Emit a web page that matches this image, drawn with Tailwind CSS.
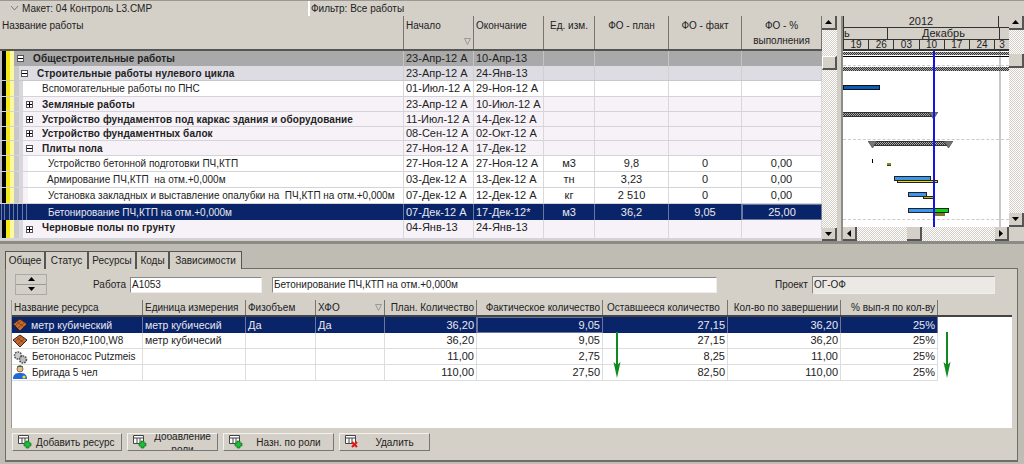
<!DOCTYPE html>
<html lang="en">
<head>
    <meta charset="UTF-8">
    <title>Контроль L3</title>
    <script src="https://cdn.jsdelivr.net/npm/@tailwindcss/browser@4"></script>
</head>
<body class="w-[1024px] h-[464px] overflow-hidden bg-[#d4d0c8] text-[10px] leading-[13px] text-[#222] font-['Liberation_Sans',sans-serif]">

<!-- top bar -->
<div class="flex h-[16px] border-t border-[#9a9890] items-center">
    <div class="w-[310px] h-full flex items-center pl-[11px] gap-[4px] border-r-2 border-white">
        <svg width="7" height="5" viewBox="0 0 7 5"><path d="M0 0 L3.5 4 L7 0" fill="none" stroke="#777"/></svg>
        <span>Макет: 04 Контроль L3.CMP</span>
    </div>
    <div class="pl-[1px]">Фильтр: Все работы</div>
</div>

<div class="flex h-[225px]">
    <!-- activity table -->
    <div class="w-[822px] flex flex-col">
        <div class="grid grid-cols-[404px_70px_70px_51px_74px_73px_80px] h-[35px] border-b-2 border-[#555] *:border-r *:border-[#77756f] *:pt-[3px] *:px-[2px]">
            <div>Название работы</div>
            <div class="relative">Начало
                <svg class="absolute right-[2px] top-[22px]" width="7" height="7" viewBox="0 0 7 7"><path d="M.5.5h6L3.5 6.5z" fill="none" stroke="#999"/></svg>
            </div>
            <div>Окончание</div>
            <div class="text-center">Ед. изм.</div>
            <div class="text-center">ФО - план</div>
            <div class="text-center">ФО - факт</div>
            <div class="text-center">ФО - %<br><span class="leading-[17px]">выполнения</span></div>
        </div>

        <!-- rows -->
        <div class="grid grid-cols-[404px_70px_70px_51px_74px_73px_80px] h-[15px] text-[11px] bg-[#a9a9a9] items-center *:h-full *:flex *:items-center *:px-[2px]">
            <div class="!pl-0 text-[10px] border-r border-[#c4c4c8]"><span class="flex h-full w-[14px] shrink-0"><span class="w-[2px] bg-[#bbb]"></span><span class="w-[4px] bg-black"></span><span class="w-[4px] bg-[#f2e916]"></span><span class="w-[4px] bg-[#fbf8a0]"></span></span><span class="ml-[3px] mr-[9px] w-[7px] h-[7px] border border-[#555] bg-white flex items-center justify-center"><span class="w-[5px] h-px bg-black"></span></span><b class="tracking-[.1px]">Общестроительные работы</b></div>
            <div class="border-r border-[#c4c4c8]">23-Апр-12 A</div><div class="border-r border-[#c4c4c8]">10-Апр-13</div><div class="border-r border-[#c4c4c8]"></div><div class="border-r border-[#c4c4c8]"></div><div class="border-r border-[#c4c4c8]"></div><div></div>
        </div>
        <div class="grid grid-cols-[404px_70px_70px_51px_74px_73px_80px] h-[15px] text-[11px] bg-[#dcdce2] border-b border-[#c8c8cc] *:h-full *:flex *:items-center *:px-[2px] *:border-r *:border-[#d0d0d4]">
            <div class="!pl-0 text-[10px]"><span class="flex h-full w-[14px] shrink-0"><span class="w-[2px] bg-[#bbb]"></span><span class="w-[4px] bg-black"></span><span class="w-[4px] bg-[#f2e916]"></span><span class="w-[4px] bg-[#fbf8a0]"></span></span><span class="w-[5px] h-full bg-[#c8c8ca]"></span><span class="ml-[2px] mr-[9px] w-[7px] h-[7px] border border-[#555] bg-white flex items-center justify-center"><span class="w-[5px] h-px bg-black"></span></span><b class="tracking-[.1px]">Строительные работы нулевого цикла</b></div>
            <div>23-Апр-12 A</div><div>24-Янв-13</div><div></div><div></div><div></div><div></div>
        </div>
        <div class="grid grid-cols-[404px_70px_70px_51px_74px_73px_80px] h-[16px] text-[11px] bg-white border-b border-[#d4d4d8] *:h-full *:flex *:items-center *:px-[2px] *:border-r *:border-[#d8d8dc]">
            <div class="!pl-0 text-[10px]"><span class="flex h-full w-[14px] shrink-0"><span class="w-[2px] bg-[#bbb]"></span><span class="w-[4px] bg-black"></span><span class="w-[4px] bg-[#f2e916]"></span><span class="w-[4px] bg-[#fbf8a0]"></span></span><span class="w-[5px] h-full bg-[#c8c8ca]"></span><span class="w-[4px] h-full bg-[#d8d8dc] mr-[19px]"></span>Вспомогательные работы по ПНС</div>
            <div>01-Июл-12 A</div><div>29-Ноя-12 A</div><div></div><div></div><div></div><div></div>
        </div>
        <div class="grid grid-cols-[404px_70px_70px_51px_74px_73px_80px] h-[15px] text-[11px] bg-[#f6f2f8] border-b border-[#d4d4d8] *:h-full *:flex *:items-center *:px-[2px] *:border-r *:border-[#d8d8dc]">
            <div class="!pl-0 text-[10px]"><span class="flex h-full w-[14px] shrink-0"><span class="w-[2px] bg-[#bbb]"></span><span class="w-[4px] bg-black"></span><span class="w-[4px] bg-[#f2e916]"></span><span class="w-[4px] bg-[#fbf8a0]"></span></span><span class="w-[5px] h-full bg-[#c8c8ca]"></span><span class="w-[4px] h-full bg-[#d8d8dc]"></span><span class="ml-[3px] mr-[9px] w-[7px] h-[7px] border border-[#555] bg-white relative flex items-center justify-center"><span class="w-[5px] h-px bg-black"></span><span class="absolute w-px h-[5px] bg-black"></span></span><b class="tracking-[.1px]">Земляные работы</b></div>
            <div>23-Апр-12 A</div><div>10-Июл-12 A</div><div></div><div></div><div></div><div></div>
        </div>
        <div class="grid grid-cols-[404px_70px_70px_51px_74px_73px_80px] h-[15px] text-[11px] bg-[#f6f2f8] border-b border-[#d4d4d8] *:h-full *:flex *:items-center *:px-[2px] *:border-r *:border-[#d8d8dc]">
            <div class="!pl-0 text-[10px]"><span class="flex h-full w-[14px] shrink-0"><span class="w-[2px] bg-[#bbb]"></span><span class="w-[4px] bg-black"></span><span class="w-[4px] bg-[#f2e916]"></span><span class="w-[4px] bg-[#fbf8a0]"></span></span><span class="w-[5px] h-full bg-[#c8c8ca]"></span><span class="w-[4px] h-full bg-[#d8d8dc]"></span><span class="ml-[3px] mr-[9px] w-[7px] h-[7px] border border-[#555] bg-white relative flex items-center justify-center"><span class="w-[5px] h-px bg-black"></span><span class="absolute w-px h-[5px] bg-black"></span></span><b class="tracking-[.1px]">Устройство фундаментов под каркас здания и оборудование</b></div>
            <div>11-Июл-12 A</div><div>14-Дек-12 A</div><div></div><div></div><div></div><div></div>
        </div>
        <div class="grid grid-cols-[404px_70px_70px_51px_74px_73px_80px] h-[14px] text-[11px] bg-[#f6f2f8] border-b border-[#d4d4d8] *:h-full *:flex *:items-center *:px-[2px] *:border-r *:border-[#d8d8dc]">
            <div class="!pl-0 text-[10px]"><span class="flex h-full w-[14px] shrink-0"><span class="w-[2px] bg-[#bbb]"></span><span class="w-[4px] bg-black"></span><span class="w-[4px] bg-[#f2e916]"></span><span class="w-[4px] bg-[#fbf8a0]"></span></span><span class="w-[5px] h-full bg-[#c8c8ca]"></span><span class="w-[4px] h-full bg-[#d8d8dc]"></span><span class="ml-[3px] mr-[9px] w-[7px] h-[7px] border border-[#555] bg-white relative flex items-center justify-center"><span class="w-[5px] h-px bg-black"></span><span class="absolute w-px h-[5px] bg-black"></span></span><b class="tracking-[.1px]">Устройство фундаментных балок</b></div>
            <div>08-Сен-12 A</div><div>02-Окт-12 A</div><div></div><div></div><div></div><div></div>
        </div>
        <div class="grid grid-cols-[404px_70px_70px_51px_74px_73px_80px] h-[15px] text-[11px] bg-[#f6f2f8] border-b border-[#d4d4d8] *:h-full *:flex *:items-center *:px-[2px] *:border-r *:border-[#d8d8dc]">
            <div class="!pl-0 text-[10px]"><span class="flex h-full w-[14px] shrink-0"><span class="w-[2px] bg-[#bbb]"></span><span class="w-[4px] bg-black"></span><span class="w-[4px] bg-[#f2e916]"></span><span class="w-[4px] bg-[#fbf8a0]"></span></span><span class="w-[5px] h-full bg-[#c8c8ca]"></span><span class="w-[4px] h-full bg-[#d8d8dc]"></span><span class="ml-[3px] mr-[9px] w-[7px] h-[7px] border border-[#555] bg-white flex items-center justify-center"><span class="w-[5px] h-px bg-black"></span></span><b class="tracking-[.1px]">Плиты пола</b></div>
            <div>27-Ноя-12 A</div><div>17-Дек-12</div><div></div><div></div><div></div><div></div>
        </div>
        <div class="grid grid-cols-[404px_70px_70px_51px_74px_73px_80px] h-[16px] text-[11px] bg-white border-b border-[#d4d4d8] *:h-full *:flex *:items-center *:px-[2px] *:border-r *:border-[#d8d8dc]">
            <div class="!pl-0 text-[10px]"><span class="flex h-full w-[14px] shrink-0"><span class="w-[2px] bg-[#bbb]"></span><span class="w-[4px] bg-black"></span><span class="w-[4px] bg-[#f2e916]"></span><span class="w-[4px] bg-[#fbf8a0]"></span></span><span class="w-[5px] h-full bg-[#c8c8ca]"></span><span class="w-[4px] h-full bg-[#d8d8dc]"></span><span class="w-[5px] h-full bg-[#f6f2f8] mr-[20px]"></span>Устройство бетонной подготовки ПЧ,КТП</div>
            <div>27-Ноя-12 A</div><div>27-Ноя-12 A</div><div class="justify-center">м3</div><div class="justify-center">9,8</div><div class="justify-center">0</div><div class="justify-center">0,00</div>
        </div>
        <div class="grid grid-cols-[404px_70px_70px_51px_74px_73px_80px] h-[16px] text-[11px] bg-white border-b border-[#d4d4d8] *:h-full *:flex *:items-center *:px-[2px] *:border-r *:border-[#d8d8dc]">
            <div class="!pl-0 text-[10px]"><span class="flex h-full w-[14px] shrink-0"><span class="w-[2px] bg-[#bbb]"></span><span class="w-[4px] bg-black"></span><span class="w-[4px] bg-[#f2e916]"></span><span class="w-[4px] bg-[#fbf8a0]"></span></span><span class="w-[5px] h-full bg-[#c8c8ca]"></span><span class="w-[4px] h-full bg-[#d8d8dc]"></span><span class="w-[5px] h-full bg-[#f6f2f8] mr-[19px]"></span>Армирование ПЧ,КТП&nbsp; на отм.+0,000м</div>
            <div>03-Дек-12 A</div><div>13-Дек-12 A</div><div class="justify-center">тн</div><div class="justify-center">3,23</div><div class="justify-center">0</div><div class="justify-center">0,00</div>
        </div>
        <div class="grid grid-cols-[404px_70px_70px_51px_74px_73px_80px] h-[16px] text-[11px] bg-white border-b border-[#d4d4d8] *:h-full *:flex *:items-center *:px-[2px] *:border-r *:border-[#d8d8dc]">
            <div class="!pl-0 text-[10px]"><span class="flex h-full w-[14px] shrink-0"><span class="w-[2px] bg-[#bbb]"></span><span class="w-[4px] bg-black"></span><span class="w-[4px] bg-[#f2e916]"></span><span class="w-[4px] bg-[#fbf8a0]"></span></span><span class="w-[5px] h-full bg-[#c8c8ca]"></span><span class="w-[4px] h-full bg-[#d8d8dc]"></span><span class="w-[5px] h-full bg-[#f6f2f8] mr-[20px]"></span><span class="whitespace-pre">Установка закладных и выставление опалубки на  ПЧ,КТП на отм.+0,000м</span></div>
            <div>07-Дек-12 A</div><div>12-Дек-12 A</div><div class="justify-center">кг</div><div class="justify-center">2 510</div><div class="justify-center">0</div><div class="justify-center">0,00</div>
        </div>
        <div class="grid grid-cols-[404px_70px_70px_51px_74px_73px_80px] h-[16px] text-[11px] bg-[#0a246a] text-[#e8e8f0] *:h-full *:flex *:items-center *:px-[2px] *:border-r *:border-[#6a78a0]">
            <div class="!pl-0 text-[10px]"><span class="flex h-full w-[28px] shrink-0 mr-[20px]"><span class="w-[2px] border-r border-[#6a78a0]"></span><span class="w-[3px] border-r border-[#6a78a0]"></span><span class="w-[5px] border-r border-[#6a78a0]"></span><span class="w-[4px] border-r border-[#6a78a0]"></span><span class="w-[4px] border-r border-[#6a78a0]"></span><span class="w-[5px] border-r border-[#6a78a0]"></span><span class="w-[4px] border-r border-[#6a78a0]"></span></span>Бетонирование ПЧ,КТП на отм.+0,000м</div>
            <div>07-Дек-12 A</div><div>17-Дек-12*</div><div class="justify-center">м3</div><div class="justify-center">36,2</div><div class="justify-center">9,05</div><div class="justify-center border border-[#e8c878]">25,00</div>
        </div>
        <div class="grid grid-cols-[404px_70px_70px_51px_74px_73px_80px] h-[20px] text-[11px] bg-[#f6f2f8] border-b-2 border-[#d4d4d8] *:h-full *:flex *:items-start *:px-[2px] *:border-r *:border-[#d8d8dc]">
            <div class="!pl-0 text-[10px]"><span class="flex h-full w-[14px] shrink-0"><span class="w-[2px] bg-[#bbb]"></span><span class="w-[4px] bg-black"></span><span class="w-[4px] bg-[#f2e916]"></span><span class="w-[4px] bg-[#fbf8a0]"></span></span><span class="w-[5px] h-full bg-[#c8c8ca]"></span><span class="w-[4px] h-full bg-[#d8d8dc]"></span><span class="ml-[3px] mr-[9px] mt-[6px] w-[7px] h-[7px] border border-[#555] bg-white relative flex items-center justify-center"><span class="w-[5px] h-px bg-black"></span><span class="absolute w-px h-[5px] bg-black"></span></span><b class="mt-[1px] tracking-[.1px]">Черновые полы по грунту</b></div>
            <div class="pt-[1px]">04-Янв-13</div><div class="pt-[1px]">24-Янв-13</div><div></div><div></div><div></div><div></div>
        </div>
    </div>

    <!-- table scrollbar -->
    <div class="w-[15px] flex flex-col bg-[repeating-conic-gradient(#d4d0c8_0_25%,#fff_0_50%)] bg-[length:2px_2px]">
        <div class="h-[14px] flex items-center justify-center bg-[#d4d0c8] border-r-2 border-b-2 border-[#555]"><svg width="7" height="4"><path d="M3.5 0L7 4H0z"/></svg></div>
        <div class="h-[14px] mt-[26px] bg-[#d4d0c8] border-r-2 border-b-2 border-[#555] border-t border-l border-t-white border-l-white"></div>
        <div class="h-[13px] mt-auto flex items-center justify-center bg-[#d4d0c8] border-r-2 border-b-2 border-[#555]"><svg width="7" height="4"><path d="M3.5 4L7 0H0z"/></svg></div>
    </div>
    <div class="w-[4px] bg-[#d4d0c8]"></div>
    <div class="w-[2px] bg-[#8c8c88]"></div>

    <!-- gantt -->
    <div class="w-[166px] flex flex-col">
        <div class="h-[35px] flex flex-col text-[11px] border-b-2 border-[#333]">
            <div class="h-[12px] flex border-b border-[#333] border-l border-l-[#333]">
                <div class="w-[155px] text-center border-r border-[#333] leading-[11px]">2012</div>
            </div>
            <div class="h-[12px] flex border-b border-[#333] border-l border-l-[#333]">
                <div class="w-[44px] border-r border-[#333] leading-[11px] overflow-hidden whitespace-nowrap">ь</div>
                <div class="w-[112px] border-r border-[#333] text-center leading-[11px]">Декабрь</div>
            </div>
            <div class="h-[9px] flex text-[10px] leading-[9px] text-center border-l border-[#333] *:w-[25.3px] *:border-r *:border-[#333]">
                <div>19</div><div>26</div><div>03</div><div>10</div><div>17</div><div>24</div><div class="!border-0 !w-[14px] overflow-hidden">3</div>
            </div>
        </div>
        <div class="relative h-[176px] bg-white overflow-hidden">
            <!-- dashed row lines -->
            <div class="absolute left-0 right-0 top-[14px] border-t border-dashed border-[#ccc]"></div>
            <div class="absolute left-0 right-0 top-[88px] border-t border-dashed border-[#ccc]"></div>
            <div class="absolute left-0 right-0 top-[168px] border-t border-dashed border-[#ccc]"></div>
            <div class="absolute left-[156px] top-0 bottom-0 w-[2px] bg-[#c8c8c8]"></div>
            <!-- summary bars -->
            <div class="absolute left-0 right-0 top-[1px] h-[3px] bg-[repeating-conic-gradient(#333_0_25%,#aaa_0_50%)] bg-[length:2px_2px]"></div>
            <div class="absolute left-0 right-0 top-[5px] h-px bg-black"></div>
            <div class="absolute left-0 right-0 top-[16px] h-[4px] bg-[repeating-conic-gradient(#333_0_25%,#aaa_0_50%)] bg-[length:2px_2px]"></div>
            <div class="absolute left-0 w-[37px] top-[34px] h-[5px] bg-[#0a5cb8] border border-[#111]"></div>
            <div class="absolute left-0 w-[90px] top-[61px] h-[5px] border-y border-[#333] bg-[repeating-conic-gradient(#333_0_25%,#aaa_0_50%)] bg-[length:2px_2px]"></div>
            <svg class="absolute left-[86px] top-[61px]" width="9" height="8"><path d="M0 0H9L4.500 7z" fill="#777" stroke="#333" stroke-width=".6"/></svg>
            <div class="absolute left-[29px] w-[76px] top-[90px] h-[5px] border-y border-[#333] bg-[repeating-conic-gradient(#333_0_25%,#aaa_0_50%)] bg-[length:2px_2px]"></div>
            <svg class="absolute left-[25px] top-[90px]" width="9" height="8"><path d="M0 0H9L4.500 7z" fill="#777" stroke="#333" stroke-width=".6"/></svg>
            <svg class="absolute left-[101px] top-[90px]" width="9" height="8"><path d="M0 0H9L4.500 7z" fill="#777" stroke="#333" stroke-width=".6"/></svg>
            <!-- task bars -->
            <div class="absolute left-[29px] top-[108px] w-px h-[4px] bg-black"></div>
            <div class="absolute left-[44px] top-[112px] w-[4px] h-[3px] bg-[#8a8a10] border-b border-[#333]"></div>
            <div class="absolute left-[51px] top-[125px] w-[37px] h-[5px] bg-[#3a96ee] border border-[#222]"></div>
            <div class="absolute left-[54px] top-[129px] w-[41px] h-[3px] bg-[#f0e000] border border-[#222]"></div>
            <div class="absolute left-[65px] top-[141px] w-[19px] h-[5px] bg-[#3a96ee] border border-[#222]"></div>
            <div class="absolute left-[80px] top-[145px] w-[12px] h-[3px] bg-[#c8b800] border border-[#222]"></div>
            <div class="absolute left-[65px] top-[157px] w-[26px] h-[5px] bg-[#3a96ee] border border-[#222]"></div>
            <div class="absolute left-[90px] top-[157px] w-[16px] h-[5px] bg-[#10d010] border border-[#222]"></div>
            <div class="absolute left-[90px] top-[162px] w-[12px] h-[3px] bg-[#7a7a20]"></div>
            <!-- today line -->
            <div class="absolute left-[90px] top-0 bottom-0 w-[2px] bg-[#1414e8]"></div>
        </div>
        <!-- gantt h scrollbar -->
        <div class="h-[14px] flex justify-between bg-[repeating-conic-gradient(#d4d0c8_0_25%,#fff_0_50%)] bg-[length:2px_2px] relative">
            <div class="w-[14px] flex items-center justify-center bg-[#d4d0c8] border-r-2 border-b-2 border-[#555]"><svg width="4" height="7"><path d="M0 3.500L4 0V7z"/></svg></div>
            <div class="absolute left-[64px] w-[15px] h-full bg-[#d4d0c8] border-r-2 border-b-2 border-[#555]"></div>
            <div class="w-[14px] flex items-center justify-center bg-[#d4d0c8] border-r-2 border-b-2 border-[#555]"><svg width="4" height="7"><path d="M4 3.500L0 0V7z"/></svg></div>
        </div>
    </div>

    <!-- gantt v scrollbar -->
    <div class="w-[15px] flex flex-col">
        <div class="h-[211px] flex flex-col bg-[repeating-conic-gradient(#d4d0c8_0_25%,#fff_0_50%)] bg-[length:2px_2px]">
            <div class="h-[14px] flex items-center justify-center bg-[#d4d0c8] border-r-2 border-b-2 border-[#555]"><svg width="7" height="4"><path d="M3.500 0L7 4H0z"/></svg></div>
            <div class="h-[14px] mt-[24px] bg-[#d4d0c8] border-r-2 border-b-2 border-[#555]"></div>
            <div class="h-[14px] mt-auto flex items-center justify-center bg-[#d4d0c8] border-r-2 border-b-2 border-[#555]"><svg width="7" height="4"><path d="M3.500 4L7 0H0z"/></svg></div>
        </div>
    </div>
</div>

<!-- bottom panel -->
<div class="h-[223px] bg-[#bfbcb4] border-t-[3px] border-[#8c8a84] flex flex-col pt-[7px] pl-[5px] pr-[6px]">
    <div class="flex h-[18px] -mb-px relative z-10 *:border *:border-b-0 *:border-[#555] *:bg-[#d4d0c8] *:flex *:items-center *:justify-center">
        <div class="w-[40px]">Общее</div>
        <div class="w-[43px]">Статус</div>
        <div class="w-[48px] border-t-2">Ресурсы</div>
        <div class="w-[33px]">Коды</div>
        <div class="w-[73px]">Зависимости</div>
    </div>
    <div class="flex-1 bg-[#d4d0c8] border border-[#6f6d68] border-b-2 mb-[2px] relative flex flex-col">
        <!-- work fields -->
        <div class="flex items-center h-[31px] relative">
            <div class="w-[32px] h-[21px] ml-[9px] flex flex-col border border-[#aaa]">
                <div class="h-1/2 flex items-center justify-center border-b border-[#999]"><svg width="7" height="4"><path d="M3.500 0L7 4H0z"/></svg></div>
                <div class="h-1/2 flex items-center justify-center"><svg width="7" height="4"><path d="M3.500 4L7 0H0z"/></svg></div>
            </div>
            <span class="ml-[46px] w-[32px] mr-[5px] whitespace-nowrap">Работа</span>
            <div class="w-[132px] h-[16px] bg-white border border-[#888] border-r-[#eee] border-b-[#eee] px-[1px] leading-[14px]">A1053</div>
            <div class="ml-[10px] w-[445px] h-[16px] bg-white border border-[#888] border-r-[#eee] border-b-[#eee] px-[1px] leading-[14px]">Бетонирование ПЧ,КТП на отм.+0,000м</div>
            <span class="ml-[58px] w-[31px] mr-[6px] whitespace-nowrap">Проект</span>
            <div class="w-[183px] h-[18px] bg-[#ece9e4] border border-[#888] border-r-[#eee] border-b-[#eee] px-[1px] leading-[16px]">ОГ-ОФ</div>
        </div>

        <!-- resources table -->
        <div class="mx-[5px] h-[128px] bg-white relative border-l border-[#999]">
            <div class="grid grid-cols-[131px_103px_70px_69px_92px_126px_125px_113px_97px_75px] h-[17px] bg-[#d4d0c8] border-b-2 border-[#444] *:border-r *:border-[#77756f] *:px-[2px] *:flex *:items-center *:whitespace-nowrap *:overflow-hidden">
                <div>Название ресурса</div><div>Единица измерения</div><div>Физобъем</div>
                <div class="justify-between">ХФО<svg width="7" height="7" viewBox="0 0 7 7"><path d="M.5.5h6L3.500 6.500z" fill="none" stroke="#999"/></svg></div>
                <div class="justify-end">План. Количество</div><div class="justify-end">Фактическое количество</div><div class="!pl-[4px]">Оставшееся количество</div><div class="justify-end">Кол-во по завершении</div><div class="justify-end">% вып-я по кол-ву</div><div class="!border-0"></div>
            </div>
            <div class="grid grid-cols-[131px_103px_70px_69px_92px_126px_125px_113px_97px] h-[16px] text-[11px] bg-[#0a246a] text-[#e8e8f0] w-[926px] *:border-r *:border-[#6a78a0] *:px-[2px] *:flex *:items-center">
                <div class="gap-[3px] !pl-0 text-[10.500px]"><svg class="shrink-0" width="16" height="14" viewBox="0 0 16 14"><path d="M1 6L8 1L15 6L8 13Z" fill="#c86a30" stroke="#3a2418"/><path d="M4.500 3.500L11.500 8.500M8 1v0M3 8L10 2M6 10L13 4" stroke="#7a3c1c" stroke-width=".8"/></svg>метр кубический</div>
                <div class="text-[10.500px]">метр кубичесий</div><div>Да</div><div>Да</div><div class="justify-end">36,20</div><div class="justify-end border border-[#e8c878]">9,05</div><div class="justify-end">27,15</div><div class="justify-end">36,20</div><div class="justify-end">25%</div>
            </div>
            <div class="grid grid-cols-[131px_103px_70px_69px_92px_126px_125px_113px_97px] h-[16px] text-[11px] w-[926px] border-b border-[#ddd] *:border-r *:border-[#ddd] *:px-[2px] *:flex *:items-center">
                <div class="gap-[4px] !pl-0 text-[10px]"><svg class="shrink-0" width="16" height="14" viewBox="0 0 16 14"><path d="M1 6L8 1L15 6L8 13Z" fill="#c86a30" stroke="#3a2418"/><path d="M4.500 3.500L11.500 8.500M3 8L10 2M6 10L13 4" stroke="#7a3c1c" stroke-width=".8"/></svg>Бетон В20,F100,W8</div>
                <div class="text-[10.500px]">метр кубичесий</div><div></div><div></div><div class="justify-end">36,20</div><div class="justify-end">9,05</div><div class="justify-end">27,15</div><div class="justify-end">36,20</div><div class="justify-end">25%</div>
            </div>
            <div class="grid grid-cols-[131px_103px_70px_69px_92px_126px_125px_113px_97px] h-[16px] text-[11px] w-[926px] border-b border-[#ddd] *:border-r *:border-[#ddd] *:px-[2px] *:flex *:items-center">
                <div class="gap-[4px] !pl-0 text-[10px] whitespace-nowrap"><svg class="shrink-0" width="16" height="14" viewBox="0 0 16 14"><circle cx="6" cy="5.500" r="3.500" fill="#ccc" stroke="#555" stroke-width="1.600" stroke-dasharray="1.600 1"/><circle cx="11" cy="9.500" r="3.500" fill="#bbb" stroke="#555" stroke-width="1.600" stroke-dasharray="1.600 1"/></svg>Бетононасос Putzmeis</div>
                <div></div><div></div><div></div><div class="justify-end">11,00</div><div class="justify-end">2,75</div><div class="justify-end">8,25</div><div class="justify-end">11,00</div><div class="justify-end">25%</div>
            </div>
            <div class="grid grid-cols-[131px_103px_70px_69px_92px_126px_125px_113px_97px] h-[16px] text-[11px] w-[926px] border-b border-[#ddd] *:border-r *:border-[#ddd] *:px-[2px] *:flex *:items-center">
                <div class="gap-[4px] !pl-0 text-[10px]"><svg class="shrink-0" width="16" height="15" viewBox="0 0 16 15"><circle cx="8" cy="4" r="3" fill="#e8b888" stroke="#7a5020" stroke-width=".8"/><path d="M5 2C5 0 11 0 11 2z" fill="#3a6040"/><path d="M1 14C1 9 4 8 8 8s7 1 7 6z" fill="#1c68d8"/><circle cx="12" cy="12" r="1.600" fill="#f0e020"/></svg>Бригада 5 чел</div>
                <div></div><div></div><div></div><div class="justify-end">110,00</div><div class="justify-end">27,50</div><div class="justify-end">82,50</div><div class="justify-end">110,00</div><div class="justify-end">25%</div>
            </div>
            <!-- green arrows over the table -->
            <svg class="absolute left-[600px] top-[32px]" width="10" height="47" viewBox="0 0 10 47"><path d="M5 0V36" stroke="#108a20" stroke-width="2"/><path d="M1.500 30 L5 46 L8.500 30 L5 33z" fill="#108a20"/></svg>
            <svg class="absolute left-[930px] top-[32px]" width="10" height="47" viewBox="0 0 10 47"><path d="M5 0V36" stroke="#108a20" stroke-width="2"/><path d="M1.500 30 L5 46 L8.500 30 L5 33z" fill="#108a20"/></svg>
        </div>

        <!-- buttons -->
        <div class="flex gap-[5px] ml-[6px] mt-[5px] *:h-[18px] *:border *:border-[#f4f2ee] *:border-r-[#777] *:border-b-[#777] *:flex *:items-center *:relative">
            <div class="w-[110px] pl-[5px] gap-[3px] whitespace-nowrap"><svg class="shrink-0" width="15" height="14" viewBox="0 0 15 14"><path d="M.5.5h10v8h-10zM.5 3h10M4 3v5M7 3v5" fill="#fff" stroke="#444"/><path d="M8 6h3v2h2v3h-2v2H8v-2H6V8h2z" fill="#18c030" stroke="#0a6018" stroke-width=".6"/></svg>Добавить ресурс</div>
            <div class="w-[91px] pl-[5px] overflow-hidden"><svg class="shrink-0" width="15" height="14" viewBox="0 0 15 14"><path d="M.5.5h10v8h-10zM.5 3h10M4 3v5M7 3v5" fill="#fff" stroke="#444"/><path d="M8 6h3v2h2v3h-2v2H8v-2H6V8h2z" fill="#18c030" stroke="#0a6018" stroke-width=".6"/></svg><span class="flex-1 text-center leading-[13px] h-[26px] mt-[2px]">Добавление<br>роли</span></div>
            <div class="w-[111px] pl-[5px]"><svg class="shrink-0" width="15" height="14" viewBox="0 0 15 14"><path d="M.5.5h10v8h-10zM.5 3h10M4 3v5M7 3v5" fill="#fff" stroke="#444"/><path d="M8 6h3v2h2v3h-2v2H8v-2H6V8h2z" fill="#18c030" stroke="#0a6018" stroke-width=".6"/></svg><span class="flex-1 text-center">Назн. по роли</span></div>
            <div class="w-[91px] pl-[5px]"><svg class="shrink-0" width="15" height="14" viewBox="0 0 15 14"><path d="M.5.5h10v8h-10zM.5 3h10M4 3v5M7 3v5" fill="#fff" stroke="#444"/><path d="M7 7l5 5M12 7l-5 5" stroke="#e01818" stroke-width="2.200"/></svg><span class="flex-1 text-center">Удалить</span></div>
        </div>
    </div>
</div>
</body>
</html>
